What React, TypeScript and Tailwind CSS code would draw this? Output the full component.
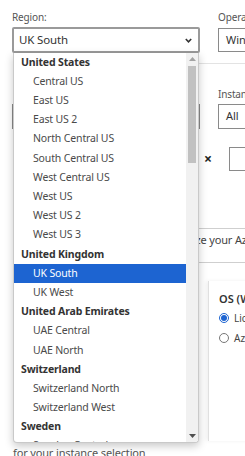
import React from "react";

const groups = [
  {
    name: "United States",
    items: [
      "Central US",
      "East US",
      "East US 2",
      "North Central US",
      "South Central US",
      "West Central US",
      "West US",
      "West US 2",
      "West US 3",
    ],
  },
  { name: "United Kingdom", items: ["UK South", "UK West"] },
  { name: "United Arab Emirates", items: ["UAE Central", "UAE North"] },
  { name: "Switzerland", items: ["Switzerland North", "Switzerland West"] },
  { name: "Sweden", items: ["Sweden Central"] },
];

const selected = "UK South";

const RegionList = () => (
  <div className="absolute left-[1px] top-full z-10 flex h-[390px] w-[186px] overflow-hidden rounded-b-[4px] border border-t-0 border-[#c9c9c9] bg-white shadow-[0_3px_8px_rgba(0,0,0,0.22)]">
    <div className="flex-1 overflow-hidden">
      {groups.map((g) => (
        <div key={g.name}>
          <div className="flex h-[19.2px] items-center pl-[7px] text-[10.5px] font-bold tracking-[-0.15px] text-[#333]">
            {g.name}
          </div>
          {g.items.map((item) => (
            <div
              key={item}
              className={
                item === selected
                  ? "flex h-[19.2px] items-center bg-[#1d64d1] pl-[19px] text-[10.5px] tracking-[-0.15px] text-white"
                  : "flex h-[19.2px] items-center pl-[19px] text-[10.5px] tracking-[-0.15px] text-[#4a4a4a]"
              }
            >
              {item}
            </div>
          ))}
        </div>
      ))}
    </div>
    {/* scrollbar */}
    <div className="flex w-[12px] flex-col items-center bg-[#f1f1f1]">
      <div className="flex h-[12px] items-center justify-center">
        <svg width="7" height="4" viewBox="0 0 7 4">
          <path d="M0 4 L3.5 0 L7 4 Z" fill="#a3a3a3" />
        </svg>
      </div>
      <div className="mt-[1px] h-[97px] w-[8px] bg-[#c1c1c1]" />
      <div className="flex-1" />
      <div className="flex h-[12px] items-center justify-center">
        <svg width="7" height="4" viewBox="0 0 7 4">
          <path d="M0 0 L7 0 L3.5 4 Z" fill="#505050" />
        </svg>
      </div>
    </div>
  </div>
);

export default function App() {
  return (
    <div className="relative h-[456px] w-[245px] overflow-hidden bg-white font-['Noto_Sans','Open_Sans',sans-serif] text-[#333]">
      {/* first row */}
      <div className="flex gap-[18px] pl-[12px] pt-[10px]">
        <div className="w-[188px] shrink-0">
          <div className="h-[14px] text-[10px] leading-[14px] tracking-[-0.15px] text-[#555]">Region:</div>
          <div className="relative mt-[3px]">
            <div className="flex h-[26px] items-center justify-between rounded-[2px] border-2 border-[#9a9a9a] bg-white pl-[5px] pr-[6px] text-[11.5px] tracking-[-0.15px] text-[#333]">
              <span>UK South</span>
              <svg width="7" height="5" viewBox="0 0 7 5">
                <path d="M0.8 1 L3.5 3.8 L6.2 1" stroke="#333" strokeWidth="1.6" fill="none" />
              </svg>
            </div>
            <RegionList />
          </div>
        </div>
        <div className="w-[80px] shrink-0">
          <div className="h-[14px] whitespace-nowrap text-[10px] leading-[14px] tracking-[-0.15px] text-[#555]">
            Operating system:
          </div>
          <div className="mt-[4px] flex h-[24px] items-center whitespace-nowrap border border-[#8a8a8a] pl-[7px] text-[11px]">
            Windows
          </div>
        </div>
      </div>

      <div className="ml-[196px] mt-[10px] h-px bg-[#e3e3e3]" />

      {/* second row */}
      <div className="mt-[23px] flex gap-[18px] pl-[12px]">
        <div className="mt-[17px] h-[25px] w-[188px] shrink-0 border border-[#8a8a8a]" />
        <div className="w-[80px] shrink-0">
          <div className="h-[14px] whitespace-nowrap text-[10px] leading-[14px] tracking-[-0.15px] text-[#555]">
            Instance type:
          </div>
          <div className="mt-[3px] flex h-[25px] items-center border border-[#8a8a8a] pl-[7px] text-[11px]">
            All
          </div>
        </div>
      </div>

      {/* third row */}
      <div className="mt-[18px] flex items-center pl-[204px]">
        <span className="w-[25px] shrink-0 text-[14px] font-bold leading-none text-[#222]">×</span>
        <div className="h-[24px] w-[40px] shrink-0 border border-[#8a8a8a]" />
      </div>

      <div className="ml-[196px] mt-[57px] h-px bg-[#cfcfcf]" />
      <p className="ml-[161px] mt-[4px] whitespace-nowrap text-[11px] leading-[14px] tracking-[-0.15px] text-[#444]">
        Optimize your Azure costs
      </p>
      <div className="ml-[196px] mt-[15px] h-px bg-[#cfcfcf]" />

      {/* OS card */}
      <div className="ml-[208px] mt-[18px] h-[160px] w-[60px] border-l border-[#e0e0e0] pl-[10px] pt-[10px] shadow-[-2px_0_4px_rgba(0,0,0,0.06)]">
        <div className="whitespace-nowrap text-[11px] font-semibold text-[#333]">OS (Windows)</div>
        <label className="mt-[3px] flex items-center gap-[5px] whitespace-nowrap text-[10px] text-[#444]">
          <span className="flex h-[10px] w-[10px] shrink-0 items-center justify-center rounded-full border border-[#1d64d1]">
            <span className="h-[6px] w-[6px] rounded-full bg-[#1d64d1]" />
          </span>
          Licensed
        </label>
        <label className="mt-[5px] flex items-center gap-[5px] whitespace-nowrap text-[10px] text-[#444]">
          <span className="h-[10px] w-[10px] shrink-0 rounded-full border border-[#777]" />
          Azure Hybrid
        </label>
      </div>

      <p className="absolute left-[13px] top-[446px] whitespace-nowrap text-[11px] leading-[14px] tracking-[-0.15px] text-[#555]">
        for your instance selection
      </p>
    </div>
  );
}
